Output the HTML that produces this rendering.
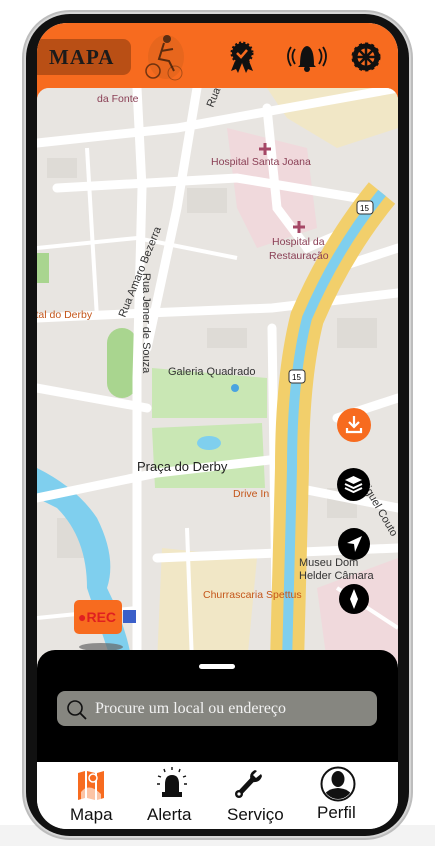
<!DOCTYPE html>
<html><head><meta charset="utf-8"><style>
*{margin:0;padding:0;box-sizing:border-box}
body{width:435px;height:846px;background:#fff;position:relative;overflow:hidden;font-family:"Liberation Sans",sans-serif}
.shadow{position:absolute;left:0;top:825px;width:435px;height:21px;background:#f3f3f3}
.frame{position:absolute;left:22px;top:10px;width:391px;height:830px;border-radius:48px;background:#d6d6d6;border:2px solid #bdbdbd}
.bezel{position:absolute;left:26px;top:14px;width:383px;height:822px;border-radius:44px;background:#111}
.screen{position:absolute;left:37px;top:23px;width:361px;height:806px;border-radius:30px;overflow:hidden;background:#fff}
.hdr{position:absolute;left:0;top:0;width:361px;height:80px;background:#f76b1f}
.mapa{position:absolute;left:0;top:16px;width:94px;height:36px;background:#b94f15;border-radius:0 8px 8px 0;font:900 21px "Liberation Serif",serif;color:#1b1b1b;letter-spacing:1px;padding:6px 0 0 12px}
.map{position:absolute;left:0;top:65px;width:361px;height:575px;border-radius:12px 12px 0 0;overflow:hidden;background:#e9e6e2}
.sheet{position:absolute;left:0;top:627px;width:361px;height:120px;background:#000;border-radius:18px 18px 0 0}
.nav{position:absolute;left:0;top:739px;width:361px;height:67px;background:#fff}
.nav div{position:absolute;top:42px;font-size:17px;color:#111}
</style></head><body>
<div class="shadow"></div>
<div class="frame"></div>
<div class="bezel"></div>
<div class="screen">
 <div class="hdr">
  <div class="mapa">MAPA</div>
  <svg style="position:absolute;left:102px;top:8px" width="50" height="52"><ellipse cx="27" cy="26" rx="18" ry="22" fill="#d8611c" opacity=".5"/><circle cx="28" cy="8" r="4" fill="#3a2010" opacity=".8"/><path d="M25 12 L20 28 L30 30 L35 40 M22 20 L34 18" stroke="#3a1d0a" stroke-width="2" fill="none" opacity=".8"/><circle cx="14" cy="40" r="7" stroke="#3a1d0a" stroke-width="1.5" fill="none" opacity=".7"/><circle cx="36" cy="42" r="7" stroke="#3a1d0a" stroke-width="1" fill="none" opacity=".4"/></svg>
  <svg style="position:absolute;left:192px;top:18px" width="30" height="34"><circle cx="13" cy="12" r="10" fill="#111" stroke="#111" stroke-width="3" stroke-dasharray="2 2"/><path d="M8 12l4 4 6-7" stroke="#f76b1f" stroke-width="2.5" fill="none"/><path d="M6 20 L2 30 L7 28 L9 32 L13 22 M20 20 L24 30 L19 28 L17 32 L13 22" fill="#111"/></svg>
  <svg style="position:absolute;left:250px;top:18px" width="40" height="32"><path d="M13 24 Q13 6 20 5 Q27 6 27 24 L29 26 H11 Z" fill="#111"/><circle cx="20" cy="28" r="3" fill="#111"/><path d="M8 8 Q3 15 8 23 M4 6 Q-2 15 4 25 M32 8 Q37 15 32 23 M36 6 Q42 15 36 25" stroke="#111" stroke-width="1.8" fill="none"/></svg>
  <svg style="position:absolute;left:314px;top:19px" width="30" height="30"><circle cx="15" cy="15" r="11" fill="none" stroke="#111" stroke-width="5"/><circle cx="15" cy="15" r="13" fill="none" stroke="#111" stroke-width="3" stroke-dasharray="3 3"/><path d="M15 4V26M4 15H26M7 7L23 23M23 7L7 23" stroke="#111" stroke-width="2.5"/><circle cx="15" cy="15" r="3" fill="#111"/></svg>
 </div>
 <div class="map">
  <svg width="361" height="575" viewBox="0 0 361 575" style="position:absolute;left:0;top:0">
   <rect width="361" height="575" fill="#e8e5e1"/>
   <g fill="#dedbd6"><rect x="10" y="70" width="30" height="20"/><rect x="150" y="100" width="40" height="25"/><rect x="300" y="230" width="40" height="30"/><rect x="20" y="430" width="30" height="40"/><rect x="290" y="400" width="30" height="30"/><rect x="170" y="240" width="40" height="20"/></g>
   <path d="M230 0 L361 0 L361 40 L300 60 L250 30Z" fill="#f1e7c6"/>
   <path d="M190 40 L270 60 L280 140 L220 160 L200 120Z" fill="#f0d9dc"/>
   <rect x="70" y="240" width="30" height="70" rx="15" fill="#a9d58f"/>
   <rect x="0" y="165" width="12" height="30" fill="#a9d58f"/>
   <path d="M115 280 L230 290 L230 330 L115 330Z" fill="#c9e7b4"/>
   <path d="M115 340 L225 335 L228 400 L118 400Z" fill="#c9e7b4"/>
   <path d="M125 460 L220 470 L210 575 L120 575Z" fill="#f1e7c6"/>
   <path d="M280 500 L361 470 L361 575 L290 575Z" fill="#f0d9dc"/>
   <path d="M0 380 Q40 400 60 430 Q80 470 70 500 Q90 540 95 575 L75 575 Q60 530 50 500 Q50 450 20 420 L0 410Z" fill="#7fcfee"/>
   <g stroke="#fff" stroke-width="9" fill="none" stroke-linecap="round">
    <path d="M0 55 L140 40 L250 20 L361 0"/>
    <path d="M100 0 L105 100 L100 290 L100 575"/>
    <path d="M160 0 L140 120 L110 260"/>
    <path d="M0 230 L110 225 L235 220 L361 205"/>
    <path d="M0 410 L120 385 L250 370"/>
    <path d="M0 300 L110 320"/>
    <path d="M230 20 L240 120 L270 160 L340 130"/>
    <path d="M20 100 L200 90 L320 110"/>
    <path d="M235 240 L240 575"/>
    <path d="M120 470 L361 460"/>
    <path d="M300 330 L361 310"/>
    <path d="M260 400 L361 420"/>
    <path d="M300 180 L361 160"/>
   </g>
   <g stroke="#fff" stroke-width="4" fill="none">
    <path d="M0 160 L100 150 L200 170"/><path d="M50 60 L60 230"/><path d="M150 440 L155 575"/><path d="M0 530 L100 520"/><path d="M300 500 L361 540"/>
   </g>
   <path d="M345 105 Q300 160 270 230 Q255 290 255 380 L250 575" stroke="#f2cf6b" stroke-width="34" fill="none"/>
   <path d="M345 105 Q300 160 270 230 Q255 290 255 380 L250 575" stroke="#7fcfee" stroke-width="10" fill="none"/>
   <g font-family="Liberation Sans,sans-serif" font-size="10.5" fill="#8a3f55">
    <text x="60" y="14">da Fonte</text><text x="174" y="77">Hospital Santa Joana</text>
    <text x="235" y="157">Hospital da</text><text x="232" y="171">Restauração</text>
   </g>
   <g font-family="Liberation Sans,sans-serif" font-size="10.5" fill="#c4561a">
    <text x="-5" y="230">rtal do Derby</text><text x="196" y="409">Drive In</text><text x="166" y="510">Churrascaria Spettus</text>
   </g>
   <g font-family="Liberation Sans,sans-serif" font-size="11" fill="#333">
    <text x="131" y="287">Galeria Quadrado</text><text x="262" y="478">Museu Dom</text><text x="262" y="491">Helder Câmara</text>
    <text x="100" y="383" font-size="13" fill="#222">Praça do Derby</text>
    <text transform="translate(88,230) rotate(-68)">Rua Amaro Bezerra</text>
    <text transform="translate(106,185) rotate(90)">Rua Jener de Souza</text>
    <text transform="translate(176,20) rotate(-68)">Rua</text>
    <text transform="translate(318,385) rotate(60)">a Miguel Couto</text>
   </g>
   <path d="M228 55 v12 M222 61 h12 M262 133 v12 M256 139 h12" stroke="#a54766" stroke-width="3"/>
   <circle cx="198" cy="300" r="4" fill="#4aa3e0"/>
   <ellipse cx="172" cy="355" rx="12" ry="7" fill="#7fcfee"/>
   <rect x="320" y="113" width="16" height="13" rx="3" fill="#fff" stroke="#333"/><text x="323" y="123" font-size="8" font-family="Liberation Sans">15</text>
   <rect x="252" y="282" width="16" height="13" rx="3" fill="#fff" stroke="#333"/><text x="255" y="292" font-size="8" font-family="Liberation Sans">15</text>
  </svg>
  <div style="position:absolute;left:300px;top:320px;width:34px;height:34px;border-radius:50%;background:#f76b1f"></div>
  <svg style="position:absolute;left:300px;top:320px" width="34" height="34"><path d="M17 8v11M12 14l5 5 5-5M10 20v4h14v-4" stroke="#fff" stroke-width="2.2" fill="none"/></svg>
  <div style="position:absolute;left:300px;top:380px;width:33px;height:33px;border-radius:50%;background:#000"></div>
  <svg style="position:absolute;left:300px;top:380px" width="33" height="33"><path d="M8 12l8.5-4 8.5 4-8.5 4z" fill="#fff"/><path d="M8 16l8.5 4 8.5-4M8 20l8.5 4 8.5-4" stroke="#fff" stroke-width="2" fill="none"/></svg>
  <div style="position:absolute;left:301px;top:440px;width:32px;height:32px;border-radius:50%;background:#000"></div>
  <svg style="position:absolute;left:301px;top:440px" width="32" height="32"><path d="M24 8 L9 15 L16 16 L17 24Z" fill="#fff"/></svg>
  <div style="position:absolute;left:302px;top:496px;width:30px;height:30px;border-radius:50%;background:#000"></div>
  <svg style="position:absolute;left:302px;top:496px" width="30" height="30"><path d="M15 5 L19 15 L15 25 L11 15Z" fill="#fff"/></svg>
  <div style="position:absolute;left:42px;top:555px;width:44px;height:8px;border-radius:50%;background:#666;opacity:.7"></div>
  <div style="position:absolute;left:37px;top:512px;width:48px;height:34px;border-radius:5px;background:#f76b1f;font-weight:bold;color:#e02020;font-size:14px;padding:9px 0 0 4px">●REC</div>
  <div style="position:absolute;left:86px;top:522px;width:13px;height:13px;background:#3b5fc9"></div>
 </div>
 <div class="sheet">
  <div style="position:absolute;left:162px;top:14px;width:36px;height:5px;border-radius:3px;background:#fff"></div>
  <div style="position:absolute;left:20px;top:41px;width:320px;height:35px;border-radius:8px;background:#868680"></div>
  <svg style="position:absolute;left:29px;top:49px" width="24" height="22"><circle cx="9" cy="9" r="7" stroke="#111" stroke-width="1.6" fill="none"/><path d="M14 14l6 6" stroke="#111" stroke-width="1.8"/></svg>
  <div style="position:absolute;left:58px;top:50px;font:16px 'Liberation Serif',serif;color:#f2f2f2">Procure um local ou endereço</div>
 </div>
 <div class="nav">
  <svg style="position:absolute;left:40px;top:8px" width="28" height="30"><path d="M1 3 L8 1 L8 28 L1 30Z M10 1 L18 3 L18 30 L10 28Z M20 3 L27 1 L27 28 L20 30Z" fill="#f76b1f"/><path d="M4 22 Q12 12 24 24 L24 30 L4 30Z" fill="#fff" opacity=".6"/><circle cx="16" cy="8" r="4" fill="#f76b1f" stroke="#fff" stroke-width="1.5"/></svg>
  <div style="left:33px;top:43px">Mapa</div>
  <svg style="position:absolute;left:117px;top:4px" width="36" height="32"><path d="M11 26 V18 Q11 9 18 9 Q25 9 25 18 V26Z" fill="#111"/><rect x="8" y="26" width="20" height="5" fill="#111"/><path d="M4 10l3 1M32 10l-3 1M10 3l1 3M26 3l-1 3M18 1v3M3 18h3M30 18h3" stroke="#111" stroke-width="1.4"/></svg>
  <div style="left:110px;top:43px">Alerta</div>
  <svg style="position:absolute;left:196px;top:5px" width="32" height="32"><path d="M5 28 L20 12" stroke="#111" stroke-width="5" stroke-linecap="round"/><circle cx="6" cy="27" r="4" fill="#111"/><circle cx="6" cy="27" r="1.6" fill="#fff"/><path d="M18 14 Q15 6 22 3 L24 4 L20 8 L23 11 L28 7 L29 9 Q27 16 19 15" fill="#111"/></svg>
  <div style="left:190px;top:43px">Serviço</div>
  <svg style="position:absolute;left:283px;top:4px" width="36" height="36"><circle cx="18" cy="18" r="16.5" fill="#fff" stroke="#111" stroke-width="2"/><clipPath id="c"><circle cx="18" cy="18" r="15"/></clipPath><g clip-path="url(#c)" fill="#111"><ellipse cx="18" cy="13" rx="6.5" ry="8"/><path d="M2 36 Q3 23 18 22 Q33 23 34 36Z"/></g></svg>
  <div style="left:280px;top:41px">Perfil</div>
 </div>
</div>
</body></html>
